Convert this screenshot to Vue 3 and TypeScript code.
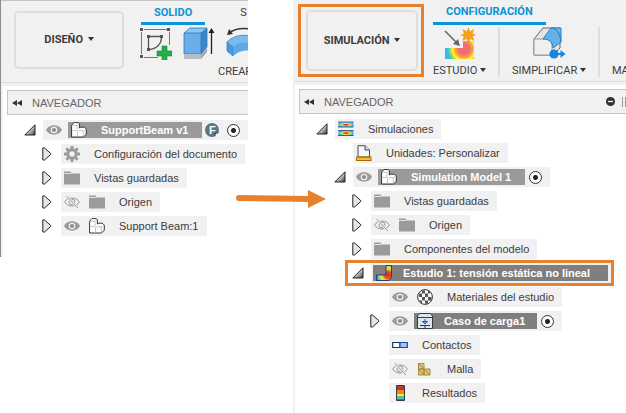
<script setup lang="ts">
import { ref } from 'vue'

type Twisty = 'open' | 'closed' | 'none'

interface TreeNode {
  label: string
  depth: number
  twisty: Twisty
  eye?: 'on' | 'off'
  icon: string
  selected?: 'light' | 'dark'
  badge?: boolean
  radio?: boolean
  outlined?: boolean
}

const designNodes = ref<TreeNode[]>([
  { label: 'SupportBeam v1', depth: 0, twisty: 'open', eye: 'on', icon: 'component', selected: 'light', badge: true, radio: true },
  { label: 'Configuración del documento', depth: 1, twisty: 'closed', icon: 'gear' },
  { label: 'Vistas guardadas', depth: 1, twisty: 'closed', icon: 'folder' },
  { label: 'Origen', depth: 1, twisty: 'closed', eye: 'off', icon: 'folder' },
  { label: 'Support Beam:1', depth: 1, twisty: 'closed', eye: 'on', icon: 'component' },
])

const simulationNodes = ref<TreeNode[]>([
  { label: 'Simulaciones', depth: 0, twisty: 'open', icon: 'studies' },
  { label: 'Unidades: Personalizar', depth: 1, twisty: 'none', icon: 'units' },
  { label: 'Simulation Model 1', depth: 1, twisty: 'open', eye: 'on', icon: 'component', selected: 'light', radio: true },
  { label: 'Vistas guardadas', depth: 2, twisty: 'closed', icon: 'folder' },
  { label: 'Origen', depth: 2, twisty: 'closed', eye: 'off', icon: 'folder' },
  { label: 'Componentes del modelo', depth: 2, twisty: 'closed', icon: 'folder' },
  { label: 'Estudio 1: tensión estática no lineal', depth: 2, twisty: 'open', icon: 'study', selected: 'dark', outlined: true },
  { label: 'Materiales del estudio', depth: 3, twisty: 'none', eye: 'on', icon: 'material' },
  { label: 'Caso de carga1', depth: 3, twisty: 'closed', eye: 'on', icon: 'load', selected: 'dark', radio: true },
  { label: 'Contactos', depth: 3, twisty: 'none', icon: 'contacts' },
  { label: 'Malla', depth: 3, twisty: 'none', eye: 'off', icon: 'mesh' },
  { label: 'Resultados', depth: 3, twisty: 'none', icon: 'results' },
])

const panels = [
  { id: 'design', nodes: designNodes },
  { id: 'simulation', nodes: simulationNodes },
]
</script>

<template>
  <svg class="defs" width="0" height="0" aria-hidden="true">
    <defs>
      <radialGradient id="heat" cx=".5" cy=".5" r=".5">
        <stop offset="0" stop-color="#e8261c" /><stop offset=".3" stop-color="#f4511f" />
        <stop offset=".55" stop-color="#ffe52e" /><stop offset=".75" stop-color="#7fdcb0" />
        <stop offset="1" stop-color="#2aa5f0" />
      </radialGradient>
      <linearGradient id="tri" x1="0" x2="1" y1="0" y2="1">
        <stop offset=".4" stop-color="#eee" /><stop offset="1" stop-color="#333" />
      </linearGradient>
      <radialGradient id="hot" gradientUnits="userSpaceOnUse" cx="12" cy="10" r="12">
        <stop offset="0" stop-color="#e8201c" /><stop offset=".3" stop-color="#f4511f" />
        <stop offset=".5" stop-color="#ffdc25" /><stop offset=".7" stop-color="#b8ea4a" />
        <stop offset=".82" stop-color="#3cc6f4" /><stop offset="1" stop-color="#2a6fe0" />
      </radialGradient>
      <radialGradient id="hotBig" gradientUnits="userSpaceOnUse" cx="20" cy="22" r="20">
        <stop offset=".28" stop-color="#ef6f6c" /><stop offset=".36" stop-color="#f58a5c" />
        <stop offset=".48" stop-color="#fdb92c" /><stop offset=".52" stop-color="#ffe92b" />
        <stop offset=".64" stop-color="#ffe92b" /><stop offset=".66" stop-color="#8edb5a" />
        <stop offset=".76" stop-color="#8edb5a" /><stop offset=".78" stop-color="#35c4f2" />
        <stop offset="1" stop-color="#35b4ee" />
      </radialGradient>
      <symbol id="i-open" viewBox="0 0 12 12">
        <path d="M11 .8V11H.8z" fill="url(#tri)" stroke="#222" />
      </symbol>
      <symbol id="i-closed" viewBox="0 0 12 14">
        <path d="M.8 1h1.700L8.800 6.600v.8L2.500 13H.8z" fill="#e3e6ea" stroke="#222" />
      </symbol>
      <symbol id="i-on" viewBox="0 0 16 16">
        <path d="M0 8C3 1.800 13 1.800 16 8 13 14.200 3 14.200 0 8z" fill="#9b9b9b" />
        <circle cx="8" cy="8" r="3.300" fill="#f1f1f1" /><circle cx="8" cy="8" r="2.100" fill="#8c8c8c" />
      </symbol>
      <symbol id="i-off" viewBox="0 0 16 16">
        <g fill="none" stroke="#999">
          <path d="M.6 8C3.500 2.700 12.500 2.700 15.400 8 12.500 13.300 3.500 13.300.6 8z" />
          <circle cx="8" cy="8" r="3" /><circle cx="8" cy="8" r="1" />
          <path d="M2.500 2l11.500 12" stroke="#f1f1f1" stroke-width="2.400" /><path d="M2.500 2l11.500 12" />
        </g>
      </symbol>
      <symbol id="i-component" viewBox="0 0 16 16">
        <path d="M.6 3.200L3 .6h4.200l1.200 1V6l1.400-.8h3.600l1.900 1.900v5L12.600 15H.6z" fill="#fff" stroke="#30343c" stroke-linejoin="round" />
        <path d="M1.500 8.500H6M6.500 9v5.500M1.500 3.500H6V8M6 3.500L8 1.600M7 8.800h5.300v5.500M12.300 8.800l2.300-1.600" fill="none" stroke="#b9bfca" stroke-width=".9" />
      </symbol>
      <symbol id="i-gear" viewBox="0 0 16 16">
        <g stroke="#9b9b9b" fill="none">
          <circle cx="8" cy="8" r="4.200" stroke-width="3" />
          <path d="M8 0v3M8 13v3M0 8h3M13 8h3M2.300 2.300l2.200 2.200M11.500 11.500l2.200 2.200M13.700 2.300l-2.200 2.200M4.500 11.500l-2.200 2.200" stroke-width="3" />
        </g>
      </symbol>
      <symbol id="i-folder" viewBox="0 0 16 16">
        <path d="M0 1.500h6.500l1 2H16V14.500H0z" fill="#9b9b9b" /><path d="M0 3.500h7" stroke="#e4e4e4" />
      </symbol>
      <symbol id="i-studies" viewBox="0 0 16 16">
        <rect x=".5" y="1.500" width="15" height="4.500" fill="url(#heat)" /><path d="M0 1h15.500M0 6h15.500" stroke="#24407c" stroke-width=".8" />
        <rect x=".5" y="10" width="15" height="4.500" fill="url(#heat)" /><path d="M0 9.500h15.500M0 14.500h15.500" stroke="#24407c" stroke-width=".8" />
      </symbol>
      <symbol id="i-units" viewBox="0 0 16 16">
        <path d="M2 12V.7h7L13.500 5v7z" fill="#f7f8fb" stroke="#444b59" /><path d="M9 .7V5h4.500" fill="#dde1e8" stroke="#444b59" />
        <rect x=".5" y="12" width="14.500" height="3.500" fill="#ffc51f" stroke="#a66b00" />
        <path d="M3 12v1.500M5 12v1.500M7 12v1.500M9 12v1.500M11 12v1.500M13 12v1.500" stroke="#a66b00" stroke-width=".7" />
      </symbol>
      <symbol id="i-study" viewBox="0 0 16 16">
        <path d="M10 .5h5.500v12L13 15.500H.5V10H10z" fill="url(#hot)" stroke="#263f7c" />
      </symbol>
      <symbol id="i-material" viewBox="0 0 16 16">
        <circle cx="8" cy="8" r="7.400" fill="#fff" stroke="#333" />
        <path d="M5 1.500h3V4.500H5zM11 2h2v2.500h-2zM2 4.500h3V8H2zM8 4.500h3V8H8zM5 8h3v3.500H5zM11 8h3.500v3.500H11zM2 11.500h3V14H4zM8 11.500h3V14.800H8z" fill="#555" />
      </symbol>
      <symbol id="i-load" viewBox="0 0 16 16">
        <path d="M.5 15.500V3L2.500.5h11L15.500 3v12.500z" fill="#dfe5ee" stroke="#333b49" /><path d="M1 4.500h14" stroke="#333b49" />
        <path d="M8 6v5M5.500 8.500L8 11l2.500-2.500M5 8.500h6" stroke="#1c5fc4" fill="none" /><path d="M3 12.500h10M8 12v3" stroke="#333" />
      </symbol>
      <symbol id="i-contacts" viewBox="0 0 16 16">
        <path d="M.7 5.500H8v5H.7z" fill="#fff" stroke="#1a3470" stroke-width="1.200" /><path d="M8 5.500h7.300v5H8z" fill="#a6c4f0" stroke="#1947a8" stroke-width="1.200" />
      </symbol>
      <symbol id="i-mesh" viewBox="0 0 16 16">
        <g fill="#dcc478" stroke="#a98d3c">
          <path d="M1.500 2.500h5.500v5.500H1.500zM1.500 8H7v6H1.500zM7 8h6v6H7z" /><path d="M1.500 2.500L7 8M1.500 8L7 14M7 8l6 6" />
        </g>
      </symbol>
      <symbol id="i-results" viewBox="0 0 16 16">
        <rect x="4" y="0" width="9" height="16" rx="1" fill="#333b49" />
        <path fill="#c9302a" d="M5 1h7v4H5z" /><path fill="#f08425" d="M5 5h7v4H5z" /><path fill="#ffe92b" d="M5 9h7v2.500H5z" />
        <path fill="#5fd450" d="M5 11.500h7v1.500H5z" /><path fill="#28c3ee" d="M5 13h7v1H5z" /><path fill="#2477df" d="M5 14h7v1H5z" />
      </symbol>
    </defs>
  </svg>

  <main class="stage">
    <section
      v-for="panel in panels"
      :key="panel.id"
      class="panel"
      :class="panel.id"
    >
      <header class="toolbar">
        <template v-if="panel.id === 'design'">
          <div class="switcher">
            <button class="workspace" type="button">DISEÑO <i class="caret"></i></button>
          </div>
          <div class="ribbon">
            <nav class="tabs">
              <a class="tab active" href="#solido">SOLIDO</a>
              <a class="tab" href="#superficie">S</a>
            </nav>
            <div class="create">
              <div class="icons">
                <svg width="33" height="33" viewBox="0 0 33 33">
                  <path d="M5 2.500h23M2.500 5v22M5 30.500h14M30.500 5v13" stroke="#777" fill="none" />
                  <path d="M9.500 10v12M10 9.500h12M22.500 10c0 7-5 12-12.500 12.500" stroke="#555" stroke-width="1.300" fill="none" />
                  <path d="M1 1h3v3H1zM28 1h3v3h-3zM1 28h3v3H1zM8 8h3v3H8zM21 8h3v3h-3zM8 21h3v3H8z" fill="#555" />
                  <path d="M23 19h5v5h5v5h-5v5h-5v-5h-5v-5h5z" fill="#24ad4b" stroke="#178737" stroke-width=".6" />
                </svg>
                <svg width="32" height="33" viewBox="0 0 32 33">
                  <path d="M1 28h17l6-7v4l-6 7H1z" fill="#a5a5a5" /><path d="M1 28h17v4H1z" fill="#bdbdbd" />
                  <path d="M1 6l6-5h17l-6 5z" fill="#8ac7f5" /><path d="M1 6h17v21H1z" fill="#68aee8" />
                  <path d="M18 6l6-5v19l-6 7z" fill="#3c86c8" />
                  <path d="M1 6l6-5h17v19l-6 7H1zM18 27V6h-17M18 6l6-5" fill="none" stroke="#2e79ba" stroke-width=".8" />
                  <path d="M28.500 27V4" stroke="#222" stroke-width="1.300" /><path d="M25.500 6l3-5 3 5z" fill="#222" />
                </svg>
                <svg width="36" height="33" viewBox="0 0 36 33">
                  <path d="M3 6C11 0 24 0 34 6" fill="none" stroke="#333" stroke-width="1.400" /><path d="M1 8l2-6 4 5z" fill="#333" />
                  <path d="M1 15C10 6 26 6 35 15l-6 8c-7-6-15-6-22 1z" fill="#7abcf0" stroke="#2f83c6" stroke-width=".8" />
                  <path d="M1 15l6 5v9l-6-5z" fill="#4b9bdc" stroke="#2f83c6" stroke-width=".8" />
                  <path d="M7 20c7-6 15-6 22-1v8c-7-6-15-4-22 2z" fill="#5ea9e4" />
                </svg>
              </div>
              <button class="menu" type="button">CREAR</button>
            </div>
          </div>
        </template>

        <template v-else>
          <div class="switcher outlined">
            <button class="workspace" type="button">SIMULACIÓN <i class="caret"></i></button>
          </div>
          <div class="ribbon">
            <nav class="tabs">
              <a class="tab active" href="#configuracion">CONFIGURACIÓN</a>
            </nav>
            <div class="tools">
              <button class="tool" type="button">
                <svg width="32" height="33" viewBox="0 0 32 33">
                  <path d="M1 21h18V14h11v18H1z" fill="url(#hotBig)" />
                  <path d="M1 4l13 13" stroke="#666" stroke-width="1.500" /><path d="M16 19l-7-2 5-5z" fill="#666" />
                  <path d="M24.500 0l1.500 4.500 4-2.800-1.300 4.800L32 8l-3.300 1.600L30.500 14l-4.300-2L24.500 17l-2-5-4.300 2 1.600-4.400L16 8l4-1.500-1.600-4.800 4.300 2.800z" fill="#f7a01c" />
                </svg>
                <span>ESTUDIO <i class="caret"></i></span>
              </button>
              <button class="tool" type="button">
                <svg width="34" height="33" viewBox="0 0 34 33">
                  <path d="M2 12L11 1h17v20l-7 7H2z" fill="#e4e4e4" stroke="#666" />
                  <path d="M2 12h11c5 0 7 4 7 8v8H2z" fill="#efefef" stroke="#999" />
                  <path d="M11 12L19 1h10v14l-8 6c0-5-3-9-10-9z" fill="#67b1ea" stroke="#2b7fc3" /><path d="M19 1c6 0 9 6 10 14" fill="none" stroke="#2b7fc3" />
                  <circle cx="22" cy="27" r="4.600" fill="#1686e0" /><path d="M26 27h4" stroke="#1686e0" stroke-width="2" /><path d="M28.500 23l5 4-5 4z" fill="#1686e0" />
                </svg>
                <span>SIMPLIFICAR <i class="caret"></i></span>
              </button>
              <button class="tool cut" type="button"><span>MA</span></button>
            </div>
          </div>
        </template>
      </header>

      <div class="browser">
        <div class="heading">
          <svg width="10" height="8" viewBox="0 0 10 8"><path d="M5 1v6L0 4zM10 1v6L5 4z" fill="#333" /></svg>
          <h2>NAVEGADOR</h2>
          <template v-if="panel.id === 'simulation'">
            <svg width="9" height="9" viewBox="0 0 9 9"><circle cx="4.500" cy="4.500" r="4.500" fill="#333" /><path d="M2 4.500h5" stroke="#fff" stroke-width="1.300" /></svg>
            <span class="grip"></span>
          </template>
        </div>
        <ul class="tree">
          <li
            v-for="node in panel.nodes.value"
            :key="node.label"
            class="row"
            :class="['depth-' + node.depth, { framed: node.outlined }]"
          >
            <span class="twisty">
              <svg v-if="node.twisty === 'open'" width="12" height="12"><use href="#i-open" /></svg>
              <svg v-else-if="node.twisty === 'closed'" width="12" height="14"><use href="#i-closed" /></svg>
            </span>
            <div class="pill" :class="{ wide: node.badge }">
              <svg v-if="node.eye" class="eye" width="16" height="16"><use :href="'#i-' + node.eye" /></svg>
              <div class="name" :class="node.selected">
                <svg width="16" height="16"><use :href="'#i-' + node.icon" /></svg>
                <span>{{ node.label }}</span>
              </div>
              <span v-if="node.badge" class="badge">F</span>
              <input
                v-if="node.radio"
                class="activate"
                type="radio"
                :name="panel.id"
                :aria-label="node.label"
                :checked="node.radio"
              />
            </div>
          </li>
        </ul>
      </div>
    </section>

    <svg class="arrow" width="90" height="18" viewBox="0 0 90 18">
      <path d="M3 8L75 9" stroke="#e8812d" stroke-width="6" stroke-linecap="round" />
      <path d="M72 0l18 9L72 18z" fill="#e8812d" />
    </svg>
  </main>
</template>

<style>
body {
  background: #fff;
}
</style>

<style scoped>
* {
  box-sizing: border-box;
}
.defs {
  position: absolute;
}
.stage {
  position: relative;
  display: grid;
  grid-template-columns: 248fr 333fr;
  column-gap: 45px;
  align-items: start;
  min-height: 100vh;
  overflow: hidden;
  font: 11px/20px "Liberation Sans", Arial, sans-serif;
  color: #3c3c3c;
}
svg {
  display: block;
  flex: none;
}
button {
  font: inherit;
  color: inherit;
  padding: 0;
  border: 0;
  background: none;
}
.panel {
  min-width: 0;
  overflow: hidden;
}
.design {
  border-left: 1px solid #8c8c8c;
  padding-bottom: 21px;
  background: linear-gradient(#f1f1f1, #f1f1f1) 0 0 / 2px 100% no-repeat;
}
.simulation {
  min-height: 100vh;
  border-left: 2px solid #f1f1f1;
}
.toolbar {
  display: flex;
  height: 86px;
  background: linear-gradient(#dcdcdc, #dcdcdc) 0 81px / 100% 1px no-repeat #f1f1f1;
  font-family: Roboto, "Liberation Sans", sans-serif;
}
.design .toolbar {
  border-top: 1px solid #c4c4c4;
}
.simulation .toolbar {
  height: 85px;
}
.switcher {
  flex: none;
  width: 126px;
  height: 74px;
  padding: 5px;
  border: 3px solid transparent;
  margin: 2px 0 0 5px;
}
.simulation .switcher {
  margin: 4px 0 0 3px;
  height: 73px;
}
.switcher.outlined {
  border-color: #e8812d;
  padding: 3px 3px 3px 5px;
}
.workspace {
  width: 100%;
  height: 100%;
  border: 2px solid #dedede;
  border-radius: 5px;
  font-weight: 700;
  white-space: nowrap;
}
.caret {
  display: inline-block;
  border: 3px solid transparent;
  border-top: 4px solid #333;
  border-bottom: 0;
  margin-left: 2px;
  vertical-align: 2px;
}
.tool .caret {
  margin-left: 0;
}
.ribbon {
  flex: 1;
  min-width: 0;
}
.design .ribbon {
  padding-left: 9px;
}
.simulation .ribbon {
  padding-left: 9px;
}
.tabs {
  display: flex;
  gap: 22px;
}
.tab {
  height: 24px;
  padding: 0 13px;
  line-height: 24px;
  color: inherit;
  text-decoration: none;
}
.simulation .tab {
  height: 25px;
}
.active {
  border-bottom: 3px solid #0b93d6;
  color: #0b93d6;
  font-weight: 700;
}
.create {
  display: grid;
  width: 120px;
  padding-top: 2px;
}
.icons {
  display: flex;
  gap: 11px;
  margin-left: -2px;
}
.menu {
  padding-left: 77px;
  line-height: 24px;
  text-align: left;
}
.tools {
  display: flex;
  gap: 12px;
  padding-top: 2px;
}
.tool {
  display: grid;
  flex: none;
  justify-items: center;
  height: 55px;
  padding-right: 14px;
  background: linear-gradient(#dedede, #dedede) 100% 0 / 2px 50px no-repeat;
  line-height: 22px;
  white-space: nowrap;
}
.tool.cut {
  align-items: end;
  background: none;
}
.browser {
  padding: 4px 0 0 6px;
}
.simulation .browser {
  padding-left: 4px;
}
.heading {
  display: flex;
  align-items: center;
  height: 25px;
  padding-left: 4px;
  border: 1px solid #c4c4c4;
  border-right: 0;
  background: #f1f1f1;
}
h2 {
  flex: 1;
  margin: 0 0 0 10px;
  color: #666;
  font: 400 11px/20px "Liberation Sans", Arial, sans-serif;
}
.grip {
  width: 4px;
  height: 10px;
  margin-left: 7px;
  border: solid #999;
  border-width: 0 1px;
}
.tree {
  display: grid;
  gap: 4px;
  margin: 0;
  padding: 5px 0 0 17px;
  list-style: none;
}
.row {
  display: flex;
  align-items: center;
  height: 20px;
}
.depth-1 {
  padding-left: 18px;
}
.depth-2 {
  padding-left: 36px;
}
.depth-3 {
  padding-left: 54px;
}
.twisty {
  flex: none;
  width: 19px;
}
.pill {
  display: flex;
  align-items: center;
  height: 20px;
  padding-right: 8px;
  background: #f1f1f1;
  white-space: nowrap;
}
.pill.wide {
  flex: 1;
}
.eye {
  margin: 0 6px 0 3px;
}
.name {
  display: flex;
  align-items: center;
  gap: 14px;
  height: 16px;
  padding-left: 3px;
}
.name.light,
.name.dark {
  padding-right: 14px;
  background: #9a9a9a;
  color: #fff;
  font-weight: 700;
}
.name.dark {
  gap: 11px;
  padding-right: 12px;
  background: #7f7f7f;
}
.framed {
  justify-self: start;
  margin-left: 32px;
  padding-left: 0;
  outline: 3px solid #e8812d;
}
.framed .twisty {
  width: 23px;
  padding-left: 4px;
}
.framed .pill {
  padding: 0 3px 0 2px;
}
.framed .name.dark {
  padding-right: 18px;
}
.badge {
  width: 14px;
  height: 14px;
  margin-left: 3px;
  border-radius: 50%;
  background: radial-gradient(circle at 12px 12px, #fff 1px, #333 2px, transparent 3px) #587788;
  color: #fff;
  font-weight: 700;
  line-height: 14px;
  text-align: center;
}
.activate {
  appearance: none;
  width: 13px;
  height: 13px;
  margin: 0 0 0 4px;
  border: 1px solid #333;
  border-radius: 50%;
  background: radial-gradient(circle, #222 2px, #fff 3px);
}
.badge + .activate {
  margin-left: 8px;
}
.arrow {
  position: absolute;
  top: 190px;
  left: calc((100% - 45px) * 248 / 581 - 12px);
}
</style>
